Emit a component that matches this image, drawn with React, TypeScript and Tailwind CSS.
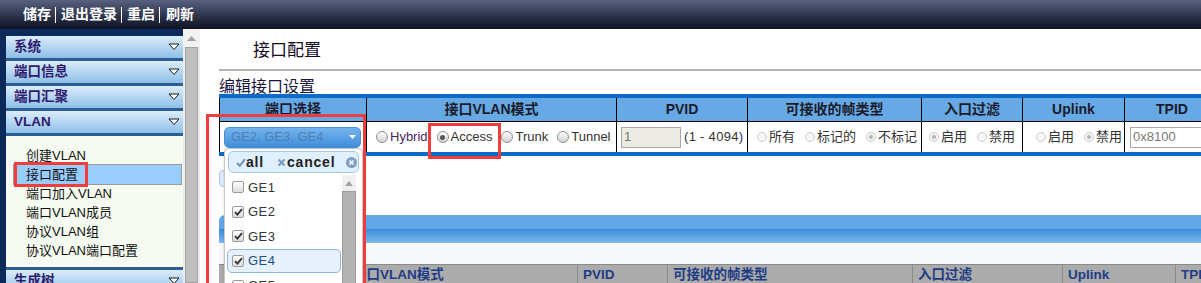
import React from 'react';

const Radio = ({ on = false, faint = false }: { on?: boolean; faint?: boolean }) => (
  <span
    className={
      faint
        ? 'flex h-[10px] w-[10px] shrink-0 items-center justify-center rounded-full border border-[#cdcdcd] bg-[#f5f5f5]'
        : 'flex h-[12px] w-[12px] shrink-0 items-center justify-center rounded-full border border-[#8e8e8e] bg-linear-to-b from-[#fdfdfd] to-[#d4d4d4]'
    }
  >
    {on && <span className={faint ? 'h-[4px] w-[4px] rounded-full bg-[#b3b3b3]' : 'h-[5px] w-[5px] rounded-full bg-[#555]'} />}
  </span>
);

const Opt = ({ label, on, faint }: { label: string; on?: boolean; faint?: boolean }) => (
  <span className="flex items-center gap-[2px]">
    <Radio on={on} faint={faint} />
    <span>{label}</span>
  </span>
);

const Box = ({ on }: { on?: boolean }) => (
  <span className="flex h-[12px] w-[12px] shrink-0 items-center justify-center rounded-[2px] border border-[#9c9c9c] bg-linear-to-b from-white to-[#dcdcdc]">
    {on && (
      <svg width="9" height="8" viewBox="0 0 9 8">
        <path d="M1 4.2 L3.4 6.6 L8 1.2" fill="none" stroke="#333" strokeWidth="1.8" />
      </svg>
    )}
  </span>
);

const Caret = () => (
  <svg width="12" height="8" viewBox="0 0 12 8">
    <path d="M1 1 H11 L6 6.5 Z" fill="#fff" stroke="#1a1a1a" strokeWidth="1" />
  </svg>
);

const MenuHead = ({ label, top = false }: { label: string; top?: boolean }) => (
  <div
    className={`flex h-[25px] shrink-0 items-center justify-between bg-linear-to-b from-[#dcedfb] to-[#8ebfe8] pl-[8px] pr-[3px] text-[13.5px] font-bold text-[#2e1b6b] ${
      top ? 'border-t-[3px] border-[#2c5d93]' : 'border-b-[3px] border-[#2c5d93]'
    }`}
  >
    <span>{label}</span>
    <Caret />
  </div>
);

const subItems = ['创建VLAN', '接口配置', '端口加入VLAN', '端口VLAN成员', '协议VLAN组', '协议VLAN端口配置'];

const cols = ['w-[147px]', 'w-[250px]', 'w-[131px]', 'w-[174px]', 'w-[101px]', 'w-[102px]', 'w-[95px]'];
const heads = ['端口选择', '接口VLAN模式', 'PVID', '可接收的帧类型', '入口过滤', 'Uplink', 'TPID'];

const lowCols = [
  { w: 'w-[128px]', t: '端口' },
  { w: 'w-[230px]', t: '接口VLAN模式' },
  { w: 'w-[90px]', t: 'PVID' },
  { w: 'w-[245px]', t: '可接收的帧类型' },
  { w: 'w-[150px]', t: '入口过滤' },
  { w: 'w-[113px]', t: 'Uplink' },
  { w: 'w-[60px]', t: 'TPID' },
];

const ports = [
  { n: 'GE1', on: false },
  { n: 'GE2', on: true },
  { n: 'GE3', on: true },
  { n: 'GE4', on: true, hot: true },
  { n: 'GE5', on: false },
];

export default function App() {
  return (
    <div className="relative h-[283px] w-[1201px] overflow-hidden bg-white font-['Liberation_Sans','Noto_Sans_CJK_SC',sans-serif] text-[#222]">
      {/* top bar */}
      <div className="flex h-[29px] items-center bg-linear-to-b from-[#58627f] to-[#0e1224] pl-[23px] text-[14px] font-bold text-white">
        <span>储存</span>
        <span className="ml-[4px] mr-[5px] h-[16px] w-px bg-white" />
        <span>退出登录</span>
        <span className="ml-[4px] mr-[5px] h-[16px] w-px bg-white" />
        <span>重启</span>
        <span className="ml-[4px] mr-[6px] h-[16px] w-px bg-white" />
        <span>刷新</span>
      </div>

      <div className="flex h-[254px]">
        {/* sidebar */}
        <div className="flex w-[183px] shrink-0 flex-col overflow-hidden border-l-[6px] border-t-[7px] border-[#0b2a59] bg-[#f5fbf0]">
          <MenuHead label="系统" />
          <MenuHead label="端口信息" />
          <MenuHead label="端口汇聚" />
          <MenuHead label="VLAN" />
          <div className="flex h-[131px] shrink-0 flex-col pt-[10px] text-[13px] text-[#111]">
            {subItems.map((s) =>
              s === '接口配置' ? (
                <div key={s} className="-my-px ml-[7px] mr-px flex h-[21px] items-center border border-[#9a9a9a] bg-[#99ccff] pl-[12px]">
                  {s}
                </div>
              ) : (
                <div key={s} className="ml-[7px] flex h-[19px] items-center pl-[13px]">
                  {s}
                </div>
              )
            )}
          </div>
          <MenuHead label="生成树" top />
        </div>

        {/* scrollbar */}
        <div className="flex w-[17px] shrink-0 flex-col bg-[#ececec]">
          <div className="flex h-[18px] items-center justify-center bg-[#f2f2f2]">
            <svg width="9" height="5" viewBox="0 0 9 5">
              <path d="M0 5 L4.5 0 L9 5 Z" fill="#a3a3a3" />
            </svg>
          </div>
          <div className="mx-[2px] flex-1 border border-[#a2a2a2] bg-[#bfbfbf]" />
        </div>

        {/* main */}
        <div className="min-w-0 flex-1 overflow-hidden pl-[19px]">
          <div className="h-[42px] border-b-2 border-[#b4b4b4] pl-[34px] pt-[12px] text-[17px] leading-[20px] text-[#150a1e]">接口配置</div>
          <div className="h-[23px] pt-[7px] text-[16px] leading-[17px] text-[#1a1540]">编辑接口设置</div>

          <div className="w-[1000px] border-y-4 border-[#0a6bc9]">
            <div className="flex h-[24px] border-b border-black bg-[#66a9e4] text-[14px] font-bold text-[#1b1b2b]">
              {heads.map((h, i) => (
                <div key={h} className={`${cols[i]} flex shrink-0 items-center justify-center border-l border-black`}>
                  {h}
                </div>
              ))}
            </div>
            <div className="flex h-[30px] text-[13px] text-[#333]">
              <div className={`${cols[0]} flex shrink-0 items-center border-l border-black pl-[4px]`}>
                <div className="flex h-[21px] w-[137px] items-center justify-between rounded-[5px] border border-[#4b8fd6] bg-linear-to-b from-[#74b4ee] to-[#3f8edb] pl-[6px] pr-[4px] text-[#4f80b4]">
                  <span>GE2, GE3, GE4</span>
                  <svg width="7" height="4" viewBox="0 0 7 4">
                    <path d="M0 0 H7 L3.5 4 Z" fill="#fff" />
                  </svg>
                </div>
              </div>
              <div className={`${cols[1]} flex shrink-0 items-center gap-[9px] border-l border-black pl-[9px]`}>
                <span className="flex items-center gap-[2px]">
                  <Radio />
                  <span className="text-[#4a1f5c]">Hybrid</span>
                </span>
                <Opt label="Access" on />
                <Opt label="Trunk" />
                <Opt label="Tunnel" />
              </div>
              <div className={`${cols[2]} flex shrink-0 items-center border-l border-black pl-[4px]`}>
                <div className="flex h-[21px] w-[60px] items-center border border-[#a9a9a9] bg-[#ebebe4] pl-[2px] text-[#777]">1</div>
                <span className="ml-[3px] tracking-[0.3px]">(1 - 4094)</span>
              </div>
              <div className={`${cols[3]} flex shrink-0 items-center gap-[10px] border-l border-black pl-[9px]`}>
                <Opt label="所有" faint />
                <Opt label="标记的" faint />
                <Opt label="不标记" faint on />
              </div>
              <div className={`${cols[4]} flex shrink-0 items-center gap-[10px] border-l border-black pl-[7px]`}>
                <Opt label="启用" faint on />
                <Opt label="禁用" faint />
              </div>
              <div className={`${cols[5]} flex shrink-0 items-center gap-[10px] border-l border-black pl-[13px]`}>
                <Opt label="启用" faint />
                <Opt label="禁用" faint on />
              </div>
              <div className={`${cols[6]} flex shrink-0 items-center border-l border-black pl-[5px]`}>
                <div className="flex h-[21px] w-[90px] items-center border border-[#a9a9a9] bg-white pl-[2px] text-[#777]">0x8100</div>
              </div>
            </div>
          </div>

          <div className="mt-[14px] h-[17px] w-[60px] rounded-[4px] border border-[#a9c9ea] bg-[#dfeefb]" />

          <div className="mt-[28px] w-[1000px]">
            <div className="h-[28px] rounded-tl-[6px] bg-[linear-gradient(to_bottom,#64a7e6_0%,#64a7e6_50%,#3b8bd9_50%,#7db9ee_100%)]" />
            <div className="h-[21px] bg-[#f7f8fa]" />
            <div className="flex h-[22px] border-t border-[#8a8a8a] bg-[#ababab] text-[13.5px] font-bold text-[#1e3c85]">
              {lowCols.map((c, i) => (
                <div key={c.t} className={`${c.w} flex shrink-0 items-center pl-[5px] ${i > 0 ? 'border-l border-[#8a8a8a]' : ''}`}>
                  {c.t}
                </div>
              ))}
            </div>
          </div>
        </div>
      </div>

      {/* dropdown panel */}
      <div className="absolute left-[224px] top-[148px] flex h-[150px] w-[139px] flex-col rounded-[4px] border border-[#c6c6c6] bg-white shadow-[0_1px_3px_rgba(0,0,0,0.15)]">
        <div className="mx-[3px] mt-[2px] flex h-[22px] items-center rounded-[5px] border border-[#a6c9e2] bg-[#dfeffc] pl-[7px] pr-[1px] text-[14px] font-bold tracking-[0.8px] text-[#222]">
          <svg width="10" height="9" viewBox="0 0 10 9">
            <path d="M1 5 L3.8 7.8 L9 1.2" fill="none" stroke="#7094bb" strokeWidth="2" />
          </svg>
          <span>all</span>
          <svg className="ml-[13px]" width="9" height="9" viewBox="0 0 9 9">
            <path d="M1.5 1.5 L7.5 7.5 M7.5 1.5 L1.5 7.5" stroke="#7e9bbd" strokeWidth="2.2" />
          </svg>
          <span className="ml-px">cancel</span>
          <svg className="ml-auto" width="11" height="11" viewBox="0 0 11 11">
            <circle cx="5.5" cy="5.5" r="5.5" fill="#7f9fc4" />
            <path d="M3.5 3.5 L7.5 7.5 M7.5 3.5 L3.5 7.5" stroke="#fff" strokeWidth="1.6" />
          </svg>
        </div>
        <div className="flex flex-1 pt-[2px]">
          <div className="flex w-[116px] flex-col">
            {ports.map((p) => (
              <div
                key={p.n}
                className={`ml-[2px] flex h-[24.6px] shrink-0 items-center gap-[4px] rounded-[5px] border pl-[4px] text-[13px] tracking-[0.5px] ${
                  p.hot ? 'border-[#8fb7e3] bg-[#e6f1fb] text-[#1d4f8a]' : 'border-transparent text-[#333]'
                }`}
              >
                <Box on={p.on} />
                <span>{p.n}</span>
              </div>
            ))}
          </div>
          <div className="ml-[1px] flex w-[14px] flex-col">
            <div className="flex h-[16px] items-center justify-center bg-[#f0f0f0]">
              <svg width="8" height="5" viewBox="0 0 8 5">
                <path d="M0 5 L4 0 L8 5 Z" fill="#a3a3a3" />
              </svg>
            </div>
            <div className="flex-1 border border-[#9c9c9c] bg-[#b3b3b3]" />
          </div>
        </div>
      </div>

      {/* red annotation boxes */}
      <div className="absolute left-[14px] top-[162px] h-[25px] w-[74px] border-[3px] border-[#f03c3c]" />
      <div className="absolute left-[206px] top-[114px] h-[172px] w-[160px] border-[3px] border-[#f03c3c]" />
      <div className="absolute left-[428px] top-[123px] h-[36px] w-[73px] border-[3px] border-[#f03c3c]" />
    </div>
  );
}
